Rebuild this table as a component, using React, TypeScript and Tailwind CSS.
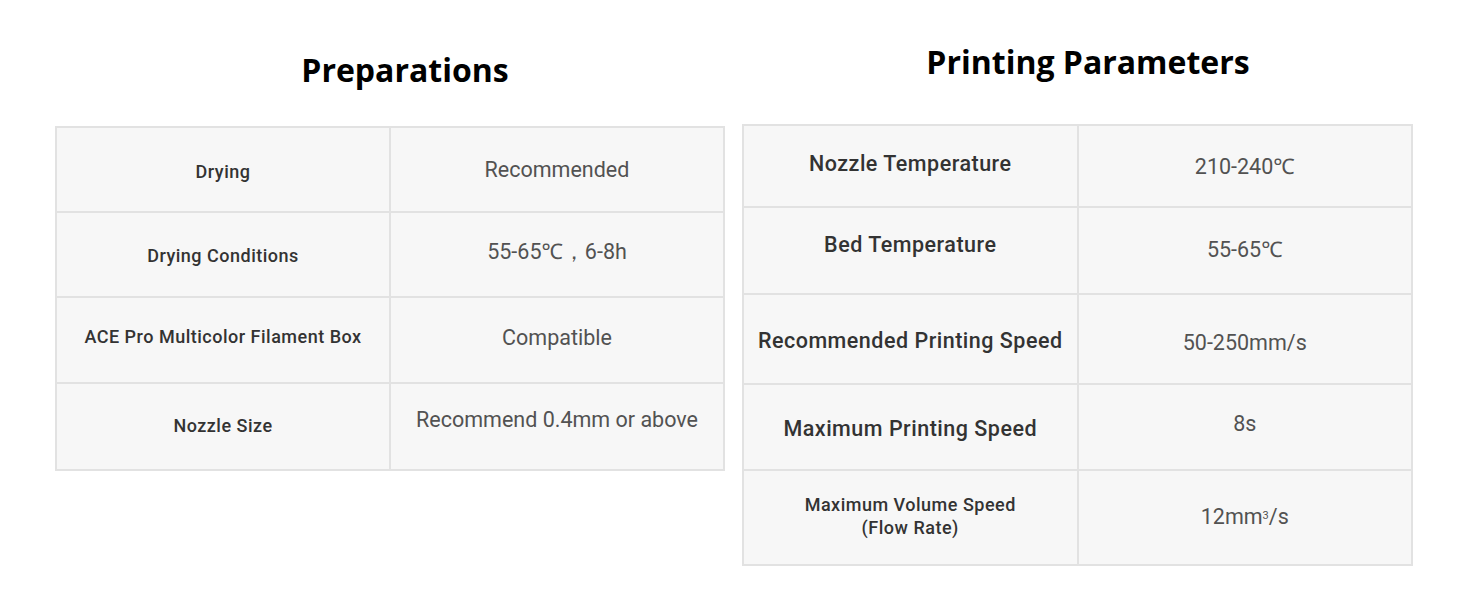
import React from "react";

const cellFont = { fontFamily: "Roboto, 'Noto Sans', sans-serif" };

function Cell({ children, className }: { children: React.ReactNode; className?: string }) {
  return (
    <div className={"bg-[#f7f7f7] flex items-center justify-center text-center " + (className || "")}>
      {children}
    </div>
  );
}

export default function App() {
  const leftRows: [string, string, string, string, string][] = [
    ["Drying", "Recommended", "h-[83px]", "pt-[4px]", "pt-[1px]"],
    ["Drying Conditions", "55-65℃，6-8h", "h-[83px]", "pt-[2px]", "pb-[4px]"],
    ["ACE Pro Multicolor Filament Box", "Compatible", "h-[84px]", "pb-[8px]", "pb-[4px]"],
    ["Nozzle Size", "Recommend 0.4mm or above", "h-[85px]", "pb-[2px]", "pb-[12px]"],
  ];
  const label = "font-medium text-[#333333]";
  const value = "text-[21.5px] text-[#525252]";
  const rlabel = "text-[21.5px] tracking-[0.5px] " + label;
  return (
    <div className="w-[1464px] h-[600px] bg-white flex items-start pl-[55px] gap-[17px]" style={{ fontFamily: "'Open Sans', sans-serif" }}>
      <div className="w-[670px] flex flex-col">
        <h2 className="h-[126px] pt-[48px] pl-[30px] text-center text-[32px] leading-[44px] font-bold text-black" style={{ fontFamily: "'Open Sans', sans-serif" }}>
          Preparations
        </h2>
        <div className="grid grid-cols-2 gap-[2px] p-[2px] bg-[#e2e2e2]" style={cellFont}>
          {leftRows.map(([k, v, h, kp, vp]) => (
            <React.Fragment key={k}>
              <Cell className={h + " text-[18px] tracking-[0.5px] " + label}>
                <span className={kp}>{k}</span>
              </Cell>
              <Cell className={h + " " + value}>
                <span className={vp}>{v}</span>
              </Cell>
            </React.Fragment>
          ))}
        </div>
      </div>
      <div className="w-[671px] flex flex-col">
        <h2 className="h-[124px] pt-[40px] pl-[21px] text-center text-[32px] leading-[44px] font-bold text-black" style={{ fontFamily: "'Open Sans', sans-serif" }}>
          Printing Parameters
        </h2>
        <div className="grid grid-cols-2 gap-[2px] p-[2px] bg-[#e2e2e2]" style={cellFont}>
          <Cell className={"h-[80px] " + rlabel}>
            <span className="pb-[4px]">Nozzle Temperature</span>
          </Cell>
          <Cell className={"h-[80px] " + value}>
            <span className="pt-[2px]">210-240℃</span>
          </Cell>
          <Cell className={"h-[85px] " + rlabel}>
            <span className="pb-[10px]">Bed Temperature</span>
          </Cell>
          <Cell className={"h-[85px] " + value}>55-65℃</Cell>
          <Cell className={"h-[88px] " + rlabel}>
            <span className="pt-[4px]">Recommended Printing Speed</span>
          </Cell>
          <Cell className={"h-[88px] " + value}>
            <span className="pt-[8px]">50-250mm/s</span>
          </Cell>
          <Cell className={"h-[84px] " + rlabel}>
            <span className="pt-[4px]">Maximum Printing Speed</span>
          </Cell>
          <Cell className={"h-[84px] " + value}>
            <span className="pb-[6px]">8s</span>
          </Cell>
          <Cell className={"h-[93px] text-[18px] tracking-[0.5px] leading-[23px] " + label}>
            <span className="pb-[4px]">
              Maximum Volume Speed
              <br />
              (Flow Rate)
            </span>
          </Cell>
          <Cell className={"h-[93px] " + value}>
            <span>
              12mm<sup className="text-[11px]">3</sup>/s
            </span>
          </Cell>
        </div>
      </div>
    </div>
  );
}
